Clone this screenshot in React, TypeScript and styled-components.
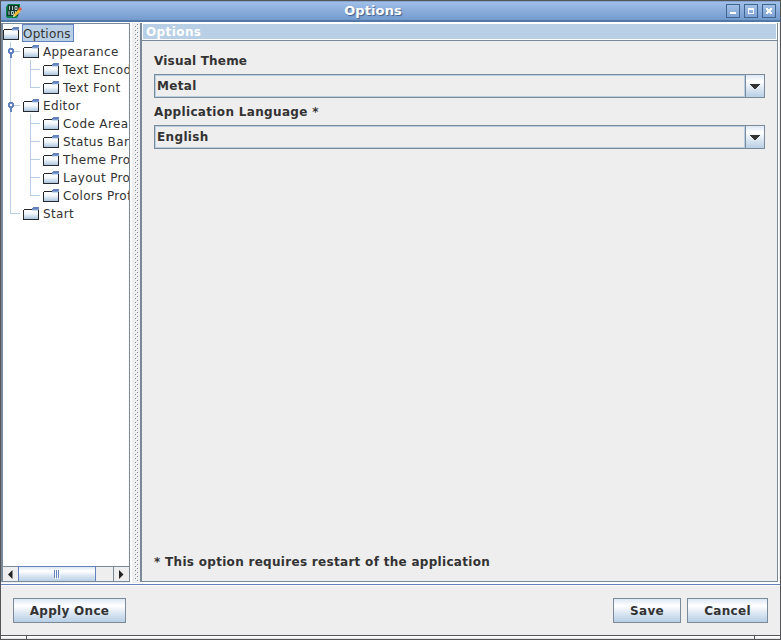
import React from "react";
import styled, { createGlobalStyle, css } from "styled-components";

const GlobalStyle = createGlobalStyle`
  * { box-sizing: border-box; }
  html, body { margin: 0; padding: 0; overflow: hidden; }
  body { font: 12px/18px "DejaVu Sans", sans-serif; color: #333; cursor: default; }
  svg { display: block; flex: none; }
`;

const ocean = "linear-gradient(#dde8f3 0%, #ffffff 30%, #dde8f3 60%, #b8cfe5 100%)";

const Frame = styled.div`
  width: 781px; height: 640px; display: flex; flex-direction: column;
  background: #eee; border: 1px solid #555459;
`;
const TitleBar = styled.header`
  height: 21px; flex: none; display: flex; align-items: center; padding: 0 4px 0 5px;
  background: linear-gradient(#9fbfe8, #749acd);
  border-top: 1px solid #86a5cf; border-bottom: 2px solid #5278a8;
`;
const Title = styled.h1`
  flex: 1; margin: 0; padding: 0 2px 1px 0; text-align: center; color: #fff;
  font: bold 13px/18px "DejaVu Sans", sans-serif; letter-spacing: 0.1px;
  text-shadow: 1px 1px 1px #405f87;
`;
const WindowButtons = styled.div`display: flex; gap: 4px;`;
const WindowButton = styled.button`
  width: 14px; height: 14px; padding: 0; border: 1px solid #3f658f;
  background: linear-gradient(#a1c0e7, #7ea2d3);
`;
const Content = styled.main`
  height: 563px; flex: none; display: flex; border-top: 1px solid #fff;
  border-bottom: 1px solid #6382bf; box-shadow: inset 0 -1px #fff;
`;
const TreePane = styled.aside`
  width: 129px; height: 559px; flex: none; display: flex; flex-direction: column;
  border: 1px solid #7a8a99; border-left-width: 2px; background: #fff;
`;
const Tree = styled.div`
  flex: 1; overflow: hidden; display: grid; grid-template-columns: 100%;
  grid-auto-rows: 18px; align-content: start;
`;
const TreeRow = styled.div`display: flex; height: 18px; overflow: hidden;`;
const TreeLabel = styled.span<{ $selected?: boolean }>`
  height: 18px; padding: 0 2px 0 4px; line-height: 20px; white-space: nowrap; letter-spacing: .36px;
  ${p => p.$selected && css`
    width: 52px; margin-left: 3px; padding: 0; line-height: 18px; letter-spacing: .2px;
    background: #b8cfe5; border: 1px solid #6382bf;
  `}
`;
const FolderIcon = styled.svg`margin-top: 2px;`;
const ScrollBar = styled.div`
  height: 15px; flex: none; display: flex; border-top: 1px solid #7a8a99; background: #eee;
`;
const ScrollArrow = styled.button`
  width: 15px; padding: 0; border: 0; background: #eee; display: grid; place-items: center;
`;
const ScrollTrack = styled.div`flex: 1; border-right: 1px solid #7a8a99; display: flex;`;
const ScrollThumb = styled.div`
  width: 78px; margin-top: -1px; height: 15px; border: 1px solid #6382bf;
  border-bottom: 0; display: flex; justify-content: center; align-items: center;
  background: ${ocean};
`;
const Divider = styled.div`
  width: 10px; flex: none; background: #eee; border-left: 2px solid #fff; height: 560px;
`;
const OptionPane = styled.section`
  width: 638px; height: 559px; flex: none; display: flex; flex-direction: column;
  border: 1px solid #7a8a99; border-left-width: 2px; border-top: 0; background: #eee;
  box-shadow: 1px 1px 0 #fff;
`;
const PaneHeader = styled.div`
  height: 17px; flex: none; padding-left: 3px; border: 1px solid #fff;
  background: #b8cfe5; color: #fff; font-weight: bold; line-height: 16px; letter-spacing: .4px;
`;
const Form = styled.div`
  flex: 1; display: flex; flex-direction: column; border-top: 1px solid #7a8a99;
  padding: 11px 12px 10px 12px;
`;
const Caption = styled.div<{ $spacing?: number }>`
  height: 18px; font-weight: bold; white-space: nowrap; letter-spacing: ${p => p.$spacing ?? 0.2}px;
`;
const Combo = styled.div`
  height: 24px; margin: 4px 0 5px; display: flex; border: 1px solid #7a8a99; font-weight: bold;
`;
const ComboValue = styled.div`
  flex: 1; border: 1px solid #b8cfe5; line-height: 20px; padding-left: 1px; letter-spacing: .35px;
`;
const ComboArrow = styled.button`
  width: 19px; border: 0; border-left: 1px solid #7a8a99; padding: 1px 0 0;
  display: grid; place-items: center; background: ${ocean};
`;
const Spacer = styled.div`flex: 1;`;
const Footer = styled.footer`
  height: 50px; flex: none; display: flex; align-items: flex-start; gap: 6px;
  padding: 12px 12px 0; border-top: 1px solid #fff;
`;
const Button = styled.button<{ $width: number }>`
  width: ${p => p.$width}px; height: 25px; padding: 1px 0 0; border: 1px solid #7a8a99;
  background: ${ocean}; color: #333; letter-spacing: .3px;
  font: bold 12px/21px "DejaVu Sans", sans-serif;
`;
const ResizeEdge = styled.div`
  height: 4px; flex: none; display: flex; justify-content: space-between; padding: 0 25px;
  border-top: 1px solid #555459; background: linear-gradient(#fff 33%, #ddd);
`;
const Grip = styled.i`width: 1px; background: #555459;`;

const Folder = () => (
  <FolderIcon width="16" height="16" shapeRendering="crispEdges">
    <defs><linearGradient id="folder" x2="0" y2="1"><stop stopColor="#fff" /><stop offset=".4" stopColor="#f2f7fb" /><stop offset="1" stopColor="#abc6df" /></linearGradient></defs>
    <path d="M1 4h14v9H1z" fill="url(#folder)" />
    <path d="M0 4h1v10H0zM1 3h8v1H1zM15 4h1v10h-1zM0 13h16v1H0z" fill="#26282c" />
    <path d="M10 1h6v1h-6zM9 2h7v1H9z" fill="#6382bf" />
    <path d="M9 3h7v1H9z" fill="#7f9bcb" /><path d="M9 4h6v1H9z" fill="#ccdbee" />
  </FolderIcon>
);

type BranchProps = { level: number; handle?: boolean; last?: boolean; outer?: boolean };

const Branch = ({ level, handle, last, outer }: BranchProps) => (
  <svg width={level * 20} height="18" shapeRendering="crispEdges">
    {(level === 1 || outer) && <path d={last && level === 1 ? "M7.5 0v9.5" : "M7.5 0v18"} fill="none" stroke="#b8cfe5" />}
    <path d={level === 1 ? "M7 9.5h10" : `M27.5 0V${last ? 9.5 : 18}M27 9.5h10`} fill="none" stroke="#b8cfe5" />
    {handle && <g><path d="M6 6h4v1h1v4h-1v1H9v4H7v-4H6v-1H5V7h1z" fill="#6382bf" /><path d="M7 8h2v2H7z" fill="#fff" /></g>}
  </svg>
);

const AppIcon = () => (
  <svg width="16" height="16" viewBox="0 0 16 16">
    <path d="M2 1h12v3l-2 9-1 2H1l-1-2V4z" fill="#078048" />
    <path d="M2 2h11l-1 11H1z" fill="#12352d" />
    <path d="M3.500 3v4M6.500 3v4M9 3.500h2v3H9zM3 8v4M5.500 8.500h2v3h-2zM9.500 8v4" fill="none" stroke="#e4f4ef" strokeWidth=".8" />
    <path d="m7 14 1-3 5-5 2 2-5 5z" fill="#f0ba30" /><path d="m12 6 2-2 2 2-2 2z" fill="#e8583e" /><path d="m7 14 1-2 1 1z" fill="#fff" />
  </svg>
);

const nodes = [
  { text: "Appearance", level: 1, handle: true },
  { text: "Text Encoding", level: 2, outer: true },
  { text: "Text Font", level: 2, outer: true, last: true },
  { text: "Editor", level: 1, handle: true },
  { text: "Code Area", level: 2, outer: true },
  { text: "Status Bar", level: 2, outer: true },
  { text: "Theme Profiles", level: 2, outer: true },
  { text: "Layout Profiles", level: 2, outer: true },
  { text: "Colors Profiles", level: 2, outer: true, last: true },
  { text: "Start", level: 1, last: true },
];

const ComboBox = ({ value }: { value: string }) => (
  <Combo>
    <ComboValue>{value}</ComboValue>
    <ComboArrow aria-label="Open list"><svg width="10" height="5" shapeRendering="crispEdges"><path d="M0 0h10v1H9v1H8v1H7v1H6v1H4V4H3V3H2V2H1V1H0z" fill="#333" /></svg></ComboArrow>
  </Combo>
);

export default function App() {
  return (
    <>
      <GlobalStyle />
      <Frame>
        <TitleBar>
          <AppIcon />
          <Title>Options</Title>
          <WindowButtons>
            <WindowButton aria-label="Minimize"><svg width="12" height="12"><path d="M3 7h6v2H3z" fill="#fff" /></svg></WindowButton>
            <WindowButton aria-label="Maximize"><svg width="12" height="12" shapeRendering="crispEdges"><path d="M3 3h6v6H3zm1 2v3h4V5z" fill="#fff" fillRule="evenodd" /></svg></WindowButton>
            <WindowButton aria-label="Close"><svg width="12" height="12" shapeRendering="crispEdges"><path d="M3 3h2v1h2V3h2v2H8v2h1v2H7V8H5v1H3V7h1V5H3z" fill="#fff" /></svg></WindowButton>
          </WindowButtons>
        </TitleBar>
        <Content>
          <TreePane>
            <Tree>
              <TreeRow><Folder /><TreeLabel $selected>Options</TreeLabel></TreeRow>
              {nodes.map(n => (
                <TreeRow key={n.text}>
                  <Branch level={n.level} handle={n.handle} last={n.last} outer={n.outer} />
                  <Folder /><TreeLabel>{n.text}</TreeLabel>
                </TreeRow>
              ))}
            </Tree>
            <ScrollBar>
              <ScrollArrow aria-label="Scroll left"><svg width="5" height="9"><path d="M4.500 0v9L0 4.500z" fill="#222" /></svg></ScrollArrow>
              <ScrollTrack>
                <ScrollThumb><svg width="6" height="9" shapeRendering="crispEdges"><path d="M.5 0v8M2.5 0v8M4.5 0v8" stroke="#6382bf" /><path d="M1.5 1v8M3.5 1v8M5.5 1v8" stroke="#fff" /></svg></ScrollThumb>
              </ScrollTrack>
              <ScrollArrow aria-label="Scroll right"><svg width="5" height="9"><path d="M0 0v9l4.500-4.500z" fill="#222" /></svg></ScrollArrow>
            </ScrollBar>
          </TreePane>
          <Divider>
            <svg width="8" height="560" shapeRendering="crispEdges">
              <defs><pattern id="bumps" width="4" height="4" patternUnits="userSpaceOnUse"><path d="M0 0h1v1H0zM2 2h1v1H2z" fill="#fff" /><path d="M1 1h1v1H1zM3 3h1v1H3z" fill="#7a8a99" /></pattern></defs>
              <path d="M2 1h5v558H2z" fill="url(#bumps)" />
            </svg>
          </Divider>
          <OptionPane>
            <PaneHeader>Options</PaneHeader>
            <Form>
              <Caption>Visual Theme</Caption>
              <ComboBox value="Metal" />
              <Caption $spacing={0.34}>Application Language *</Caption>
              <ComboBox value="English" />
              <Spacer />
              <Caption $spacing={0.3}>* This option requires restart of the application</Caption>
            </Form>
          </OptionPane>
        </Content>
        <Footer>
          <Button $width={113}>Apply Once</Button>
          <Spacer />
          <Button $width={68}>Save</Button>
          <Button $width={81}>Cancel</Button>
        </Footer>
        <ResizeEdge><Grip /><Grip /></ResizeEdge>
      </Frame>
    </>
  );
}
